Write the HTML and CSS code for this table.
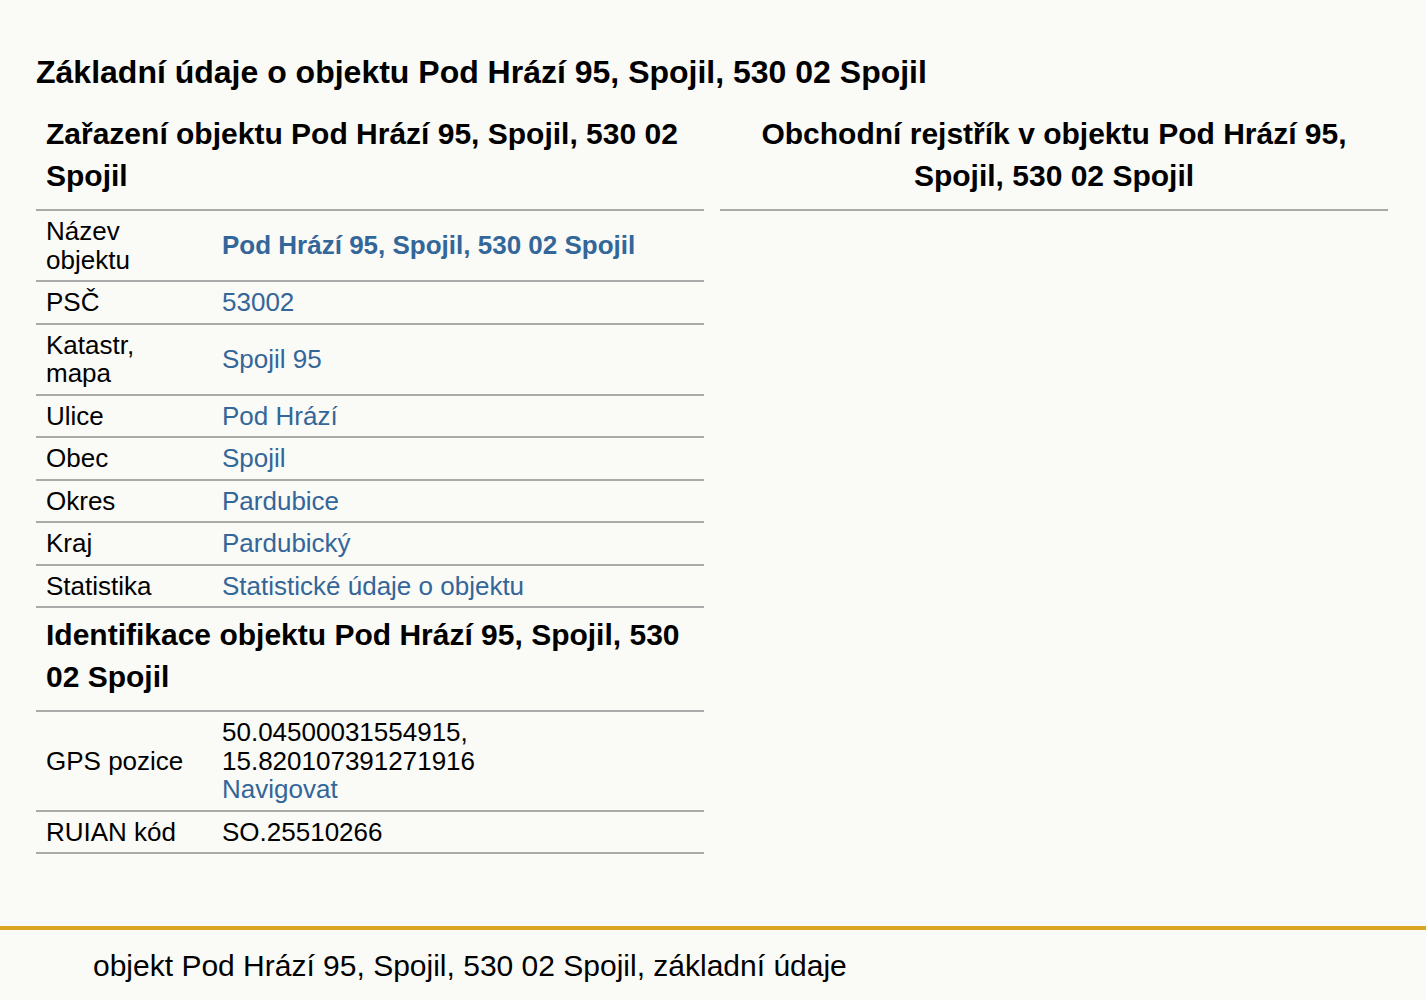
FILE: index.html
```html
<!DOCTYPE html>
<html lang="cs">
<head>
  <meta charset="UTF-8" />
  <title>Pod Hrází 95, Spojil, 530 02 Spojil</title>
  <link rel="stylesheet" href="styles.css">
</head>
<body>

<!-- Obsah -->
<div class="obsah">
  <h1>Základní údaje o objektu Pod Hrází 95, Spojil, 530 02 Spojil</h1>

  <div class="sloupce">
    <div class="sloupec">
      <table class="udaje">
        <tr><th colspan="2"><h2>Zařazení objektu Pod Hrází 95, Spojil, 530 02 Spojil</h2></th></tr>
        <tr><td class="popis">Název objektu</td><td><a href="#" class="tucne">Pod Hrází 95, Spojil, 530 02 Spojil</a></td></tr>
        <tr><td class="popis">PSČ</td><td><a href="#">53002</a></td></tr>
        <tr><td class="popis">Katastr, mapa</td><td><a href="#">Spojil 95</a></td></tr>
        <tr><td class="popis">Ulice</td><td><a href="#">Pod Hrází</a></td></tr>
        <tr><td class="popis">Obec</td><td><a href="#">Spojil</a></td></tr>
        <tr><td class="popis">Okres</td><td><a href="#">Pardubice</a></td></tr>
        <tr><td class="popis">Kraj</td><td><a href="#">Pardubický</a></td></tr>
        <tr><td class="popis">Statistika</td><td><a href="#">Statistické údaje o objektu</a></td></tr>
        <tr><th colspan="2"><h2>Identifikace objektu Pod Hrází 95, Spojil, 530 02 Spojil</h2></th></tr>
        <tr><td class="popis">GPS pozice</td><td>50.04500031554915,<br>15.820107391271916<br><a href="#">Navigovat</a></td></tr>
        <tr><td class="popis">RUIAN kód</td><td>SO.25510266</td></tr>
      </table>
    </div>

    <div class="sloupec">
      <table class="udaje">
        <tr><th class="stred"><h2>Obchodní rejstřík v objektu Pod Hrází 95, Spojil, 530 02 Spojil</h2></th></tr>
      </table>
    </div>
  </div>
</div>

<!-- Patička -->
<div class="paticka">
  <p>objekt Pod Hrází 95, Spojil, 530 02 Spojil, základní údaje</p>
</div>

</body>
</html>
```

FILE: styles.css
```css
* { box-sizing: border-box; }
body {
  margin: 0;
  background: #fafaf7;
  color: #000;
  font-family: "Liberation Sans", Arial, sans-serif;
}

a {
  color: #336699;
  text-decoration: none;
}

.tucne { font-weight: bold; }

.obsah {
  padding: 54px 38px 0 36px;
}

h1 {
  margin: 0 0 16px;
  font-size: 32px;
  line-height: 37px;
}

.sloupce {
  display: grid;
  grid-template-columns: 1fr 1fr;
  gap: 16px;
}

.udaje {
  width: 100%;
  border-collapse: collapse;
  font-size: 26px;
}

.udaje th {
  text-align: left;
  padding: 6px 10px 12px;
  border-bottom: 2px solid #aaa;
}

.udaje th.stred { text-align: center; }

.udaje h2 {
  margin: 0;
  font-size: 30px;
  line-height: 42px;
}

.udaje td {
  padding: 6px 10px;
  line-height: 28.5px;
  border-bottom: 2px solid #aaa;
  vertical-align: middle;
}

.udaje td.popis { width: 176px; }

.paticka {
  margin-top: 72px;
  border-top: 4px solid #daa520;
  padding: 16px 0 12px 93px;
}

.paticka p {
  margin: 0;
  font-size: 30px;
  line-height: 40px;
}
```
